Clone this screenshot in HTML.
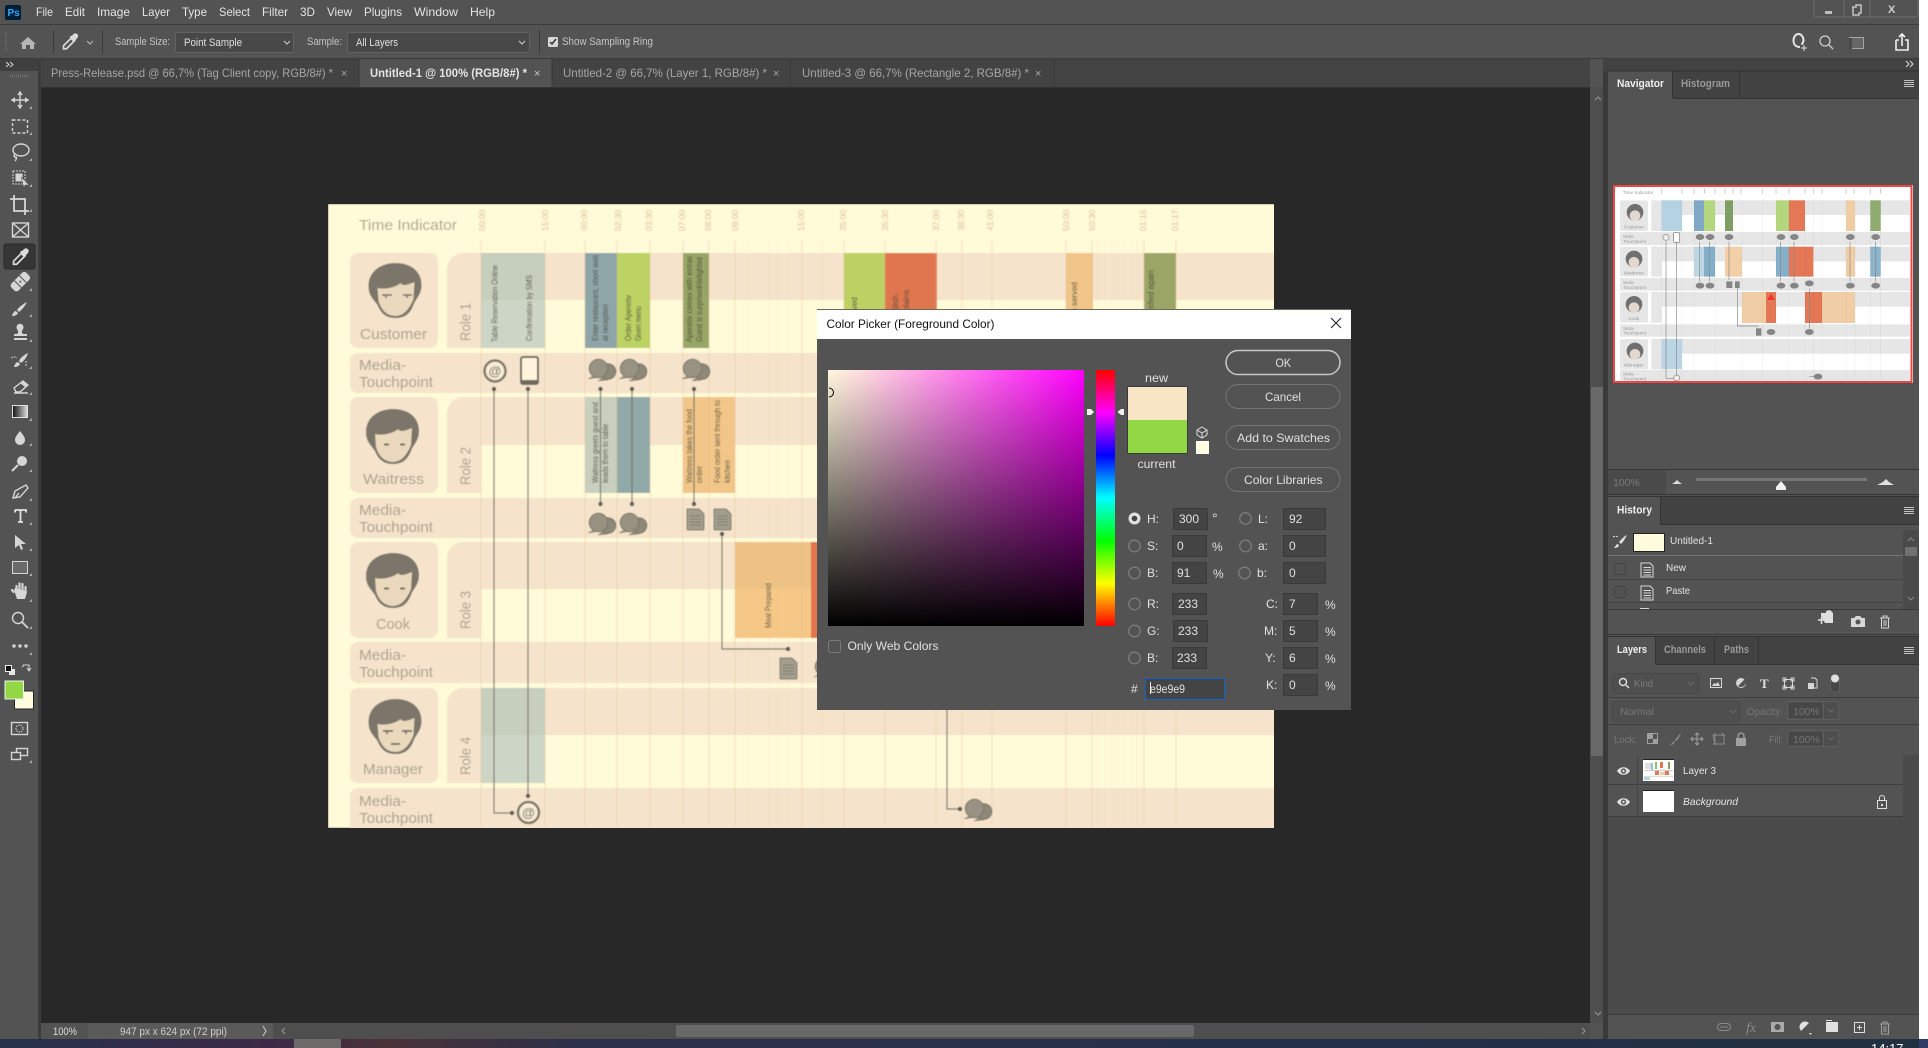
<!DOCTYPE html>
<html><head><meta charset="utf-8"><title>Photoshop Color Picker</title>
<style>
html,body{margin:0;padding:0;background:#fff;width:1928px;height:1048px;overflow:hidden}
svg{display:block;font-family:"Liberation Sans",sans-serif}
.m{fill:#e4e4e4;font-size:12px}
.o{fill:#c4c4c4;font-size:11px}
.t{fill:#a6a6a6;font-size:12px}
.d{fill:#e0e0e0;font-size:12px}
.p{fill:#f0f0f0;font-size:11px;font-weight:bold}
.q{fill:#9a9a9a;font-size:11px;font-weight:bold}
.l{fill:#e4e4e4;font-size:10.5px}
.g{fill:#777;font-size:10.5px}
.a{fill:#a99f8c;font-size:15px}
.b{fill:#474b39;font-size:8px}
.tm{fill:#dcb896;font-size:8.5px}
.ic{fill:none;stroke:#d6d6d6;stroke-width:1.4}
.if{fill:#d6d6d6}
.ln{stroke:#7d776b;stroke-width:1.2;fill:none}
.vl{stroke:#e3b78f;stroke-opacity:.28;stroke-width:1.3}
.vf{stroke:#e3b78f;stroke-opacity:.14;stroke-width:1}
.fd{fill:#444;stroke:#3a3a3a}
.rd{fill:none;stroke:#7c7c7c;stroke-width:1.3}
.bt{fill:none;stroke:#757575;stroke-width:1}
</style></head><body>
<svg width="1928" height="1048" viewBox="0 0 1928 1048" xmlns="http://www.w3.org/2000/svg">
<defs>
<filter id="bl" x="0" y="0" width="1" height="1"><feGaussianBlur stdDeviation=".4"/></filter>
<linearGradient id="gh" x1="0" x2="1" y1="0" y2="0"><stop offset="0" stop-color="#fff8dc"/><stop offset=".13" stop-color="#ffdce0"/><stop offset="1" stop-color="#f0f"/></linearGradient>
<linearGradient id="gv" x1="0" x2="0" y1="0" y2="1"><stop offset="0" stop-color="#000" stop-opacity="0"/><stop offset="1" stop-color="#000"/></linearGradient>
<linearGradient id="hue" x1="0" x2="0" y1="0" y2="1"><stop offset="0" stop-color="#f00"/><stop offset=".167" stop-color="#f0f"/><stop offset=".333" stop-color="#00f"/><stop offset=".5" stop-color="#0ff"/><stop offset=".667" stop-color="#0f0"/><stop offset=".833" stop-color="#ff0"/><stop offset="1" stop-color="#f00"/></linearGradient>
<linearGradient id="tb" x1="0" x2="1" y1="0" y2="0"><stop offset="0" stop-color="#25324a"/><stop offset=".14" stop-color="#3d2947"/><stop offset=".2" stop-color="#4a3238"/><stop offset=".3" stop-color="#2c3048"/><stop offset=".7" stop-color="#252f4a"/><stop offset="1" stop-color="#21303f"/></linearGradient>
<linearGradient id="gg"><stop offset="0" stop-color="#111"/><stop offset="1" stop-color="#ddd"/></linearGradient>
<g id="hair"><path d="M-27-5C-27-20-14-28 0-28 15-28 26-20 26-6 26 4 20 8 18 14 14 24 8 27 0 27-8 27-14 24-18 14-22 8-27 5-27-5Z" fill="#7b7569"/><path d="M-18-3C-10-1 1-4 5-8 7-4 14-7 19-9L18 8C14 18 8 25 0 25-8 25-14 20-17 10Z" fill="#ead9bc"/></g>
<g id="bub"><circle cx="20" cy="12.500" r="7.800" fill="#8e8878" stroke="#7a7468"/><path d="M15 18.500l-5 3.500 10-1z" fill="#8e8878" stroke="#7a7468" stroke-width=".5"/><circle cx="10.500" cy="9.500" r="9.300" fill="#989283" stroke="#7a7468"/><path d="M5 17l-5 3 10-1.500z" fill="#989283" stroke="#7a7468" stroke-width=".5"/></g>
<g id="doc"><path d="M1 1H13L18 6V21a1 1 0 0 1-1 1H2a1 1 0 0 1-1-1Z" fill="#a39d8e" stroke="#7d776b"/><path d="M4 8H15M4 11H15M4 14H15M4 17H15" stroke="#76705f" stroke-width=".8"/></g>
<g id="hist"><path d="M.5.5h9l3 3v11H.500z" fill="none" stroke="#dadada"/><path d="M3 5h7.500M3 7.500h7.500M3 10h7.500M3 12.500h7.500" stroke="#dadada"/></g>
<g id="trash"><path d="M1 3h10M4 3V1h4v2M2.500 3v10h7V3M5 5v6M7 5v6" fill="none" stroke="#d6d6d6"/></g>
<g id="menuic"><path d="M0 .5h10M0 2.500h10M0 4.500h10M0 6.500h10" stroke="#c4c4c4"/></g>
<g id="eye"><path d="M0 5C3 0 10 0 13 5 10 10 3 10 0 5Z" fill="#e0e0e0"/><circle cx="6.500" cy="5" r="2.600" fill="#535353"/><circle cx="6.500" cy="5" r="1.200" fill="#e0e0e0"/></g>
<g id="dd"><path d="M1 10.500V8.500L6 3.500 8 5.500 3 10.500Z" fill="none" stroke="#dcdcdc" stroke-width="1.100"/><path d="M5 2.500L7 1.500C8 0 9.500 0 10.300.8 11 1.500 11 3 9.500 4L8.500 6Z" fill="#dcdcdc"/></g>
</defs>

<!-- base -->
<rect width="1928" height="1048" fill="#ffffff"/>
<rect width="1920" height="1039" fill="#535353"/>
<rect x="1919" y="0" width="9" height="1039" fill="#fff"/>
<rect x="0" y="24" width="1919" height="1" fill="#3b3b3b"/>
<rect x="0" y="58" width="1919" height="1" fill="#3b3b3b"/>
<rect x="41" y="59" width="1549" height="28" fill="#434343"/>
<rect x="41" y="87" width="1549" height="936" fill="#282828"/>
<rect x="38" y="59" width="3" height="980" fill="#3c3c3c"/>
<rect x="0" y="59" width="38" height="12" fill="#3f3f3f"/>

<!-- menu -->
<rect x="5" y="5" width="16" height="15" rx="2" fill="#001e36"/>
<text x="7.500" y="16" font-size="10" font-weight="bold" fill="#31a8ff">Ps</text>
<text class="m" x="36" y="16" textLength="17" lengthAdjust="spacingAndGlyphs">File</text>
<text class="m" x="65" y="16" textLength="20" lengthAdjust="spacingAndGlyphs">Edit</text>
<text class="m" x="97" y="16" textLength="33" lengthAdjust="spacingAndGlyphs">Image</text>
<text class="m" x="142" y="16" textLength="28" lengthAdjust="spacingAndGlyphs">Layer</text>
<text class="m" x="182" y="16" textLength="25" lengthAdjust="spacingAndGlyphs">Type</text>
<text class="m" x="219" y="16" textLength="31" lengthAdjust="spacingAndGlyphs">Select</text>
<text class="m" x="262" y="16" textLength="26" lengthAdjust="spacingAndGlyphs">Filter</text>
<text class="m" x="300" y="16" textLength="15" lengthAdjust="spacingAndGlyphs">3D</text>
<text class="m" x="327" y="16" textLength="25" lengthAdjust="spacingAndGlyphs">View</text>
<text class="m" x="364" y="16" textLength="38" lengthAdjust="spacingAndGlyphs">Plugins</text>
<text class="m" x="414" y="16" textLength="44" lengthAdjust="spacingAndGlyphs">Window</text>
<text class="m" x="470" y="16" textLength="25" lengthAdjust="spacingAndGlyphs">Help</text>
<!-- window controls -->
<path d="M1814 0v15a2 2 0 0 0 2 2h100a2 2 0 0 0 2-2V0" fill="none" stroke="#6c6c6c"/>
<path d="M1844 0v17M1870 0v17" stroke="#6c6c6c"/>
<rect x="1825" y="11" width="7" height="3" fill="#bdbdbd"/>
<path d="M1852 7h4v-2h5v8h-2v2h-6v-8" fill="none" stroke="#c4c4c4" stroke-width="1.500"/>
<text x="1888" y="13" font-size="11" fill="#cfcfcf" font-weight="bold">X</text>

<!-- options bar -->
<path d="M28 37l8 7h-2v5h-4v-4h-4v4h-4v-5h-2z" fill="#b6b6b6"/>
<path d="M53.500 30v24M102.500 30v24M539.500 30v24" stroke="#3b3b3b"/>
<path d="M6 32v20" stroke="#666" stroke-dasharray="1 1" stroke-width="2"/>
<g transform="translate(62,33) scale(1.500)"><use href="#dd"/></g>
<path d="M87 41l3 3 3-3" fill="none" stroke="#bbb"/>
<text class="o" x="115" y="45" textLength="55" lengthAdjust="spacingAndGlyphs">Sample Size:</text>
<rect x="175.500" y="32.500" width="118" height="20" rx="2" fill="#484848" stroke="#626262"/>
<text class="d" style="font-size:11px" x="184" y="46" textLength="58" lengthAdjust="spacingAndGlyphs">Point Sample</text>
<path d="M284 41l3 3 3-3" fill="none" stroke="#ccc"/>
<text class="o" x="307" y="45" textLength="35" lengthAdjust="spacingAndGlyphs">Sample:</text>
<rect x="347.500" y="32.500" width="182" height="20" rx="2" fill="#484848" stroke="#626262"/>
<text class="d" style="font-size:11px" x="356" y="46" textLength="42" lengthAdjust="spacingAndGlyphs">All Layers</text>
<path d="M519 41l3 3 3-3" fill="none" stroke="#ccc"/>
<rect x="548" y="37" width="10" height="10" rx="1.500" fill="#d8d8d8"/><path d="M550 42l2 2 4-5" fill="none" stroke="#333" stroke-width="1.500"/>
<text class="o" x="562" y="45" textLength="91" lengthAdjust="spacingAndGlyphs">Show Sampling Ring</text>
<!-- right option icons -->
<path d="M1800 47c-4 0-6.500-2.500-6.500-6.500s2.500-6.500 5-6.500 5 2.500 5 6.500c0 2-1 3-2 4" fill="none" stroke="#e4e4e4" stroke-width="2"/><path d="M1801 48h6M1804 45v6" stroke="#e4e4e4"/>
<circle cx="1825" cy="41" r="5" fill="none" stroke="#cfcfcf" stroke-width="1.300"/><path d="M1829 45l4 4" stroke="#cfcfcf" stroke-width="1.300"/>
<rect x="1849.500" y="37.500" width="14" height="11" fill="#666" stroke="#a6a6a6"/><path d="M1849 38h3v11h-3" fill="#4a4a4a"/>
<path d="M1896 40v10h12V40h-3M1899 40h-3M1902 46V34M1899 37l3-3 3 3" fill="none" stroke="#f0f0f0" stroke-width="1.600"/>

<!-- tabs -->
<rect x="359" y="59" width="193" height="28" fill="#535353"/>
<path d="M359 59v28M552 59v28M790 59v28M1054 59v28" stroke="#383838"/>
<rect x="41" y="87" width="1549" height="1" fill="#333"/>
<text class="t" x="51" y="77" textLength="282" lengthAdjust="spacingAndGlyphs">Press-Release.psd @ 66,7% (Tag Client copy, RGB/8#) *</text>
<text x="341" y="77" font-size="11" fill="#a6a6a6">×</text>
<text class="m" font-weight="bold" x="370" y="77" textLength="157" lengthAdjust="spacingAndGlyphs">Untitled-1 @ 100% (RGB/8#) *</text>
<text x="534" y="77" font-size="11" fill="#ccc">×</text>
<text class="t" x="563" y="77" textLength="204" lengthAdjust="spacingAndGlyphs">Untitled-2 @ 66,7% (Layer 1, RGB/8#) *</text>
<text x="773" y="77" font-size="11" fill="#a6a6a6">×</text>
<text class="t" x="802" y="77" textLength="227" lengthAdjust="spacingAndGlyphs">Untitled-3 @ 66,7% (Rectangle 2, RGB/8#) *</text>
<text x="1035" y="77" font-size="11" fill="#a6a6a6">×</text>

<!-- toolbar -->
<path d="M6 62l3 2.500-3 2.500M10 62l3 2.500-3 2.500" fill="none" stroke="#d8d8d8"/>
<path d="M10 76h19" stroke="#6c6c6c" stroke-width="3" stroke-dasharray="1 1"/>
<path d="M32 106v3h-3zM32 132v3h-3zM32 158v3h-3zM32 184v3h-3zM32 209v3h-3zM32 262v3h-3zM32 288v3h-3zM32 314v3h-3zM32 339v3h-3zM32 366v3h-3zM32 392v3h-3zM32 418v3h-3zM32 443v3h-3zM32 469v3h-3zM32 498v3h-3zM32 522v3h-3zM32 548v3h-3zM32 573v3h-3zM32 599v3h-3zM32 626v3h-3zM32 652v3h-3zM32 760v3h-3z" fill="#aaa"/>
<!-- move --><path d="M20 93v14M13 100h14M18 95l2-3 2 3M18 105l2 3 2-3M15 98l-3 2 3 2M25 98l3 2-3 2" class="ic"/>
<!-- marquee --><rect x="12.500" y="120" width="15" height="13" fill="none" stroke="#d6d6d6" stroke-width="1.400" stroke-dasharray="3 2"/>
<!-- lasso --><ellipse cx="21" cy="150" rx="8" ry="6" class="ic"/><path d="M15 154c-2 2 0 4 1 3 1 1 0 3-1 4" class="ic"/>
<!-- object select --><rect x="13" y="171" width="12" height="13" fill="none" stroke="#d6d6d6" stroke-dasharray="2 1"/><rect x="15.500" y="173.500" width="7" height="8" fill="#d6d6d6"/><path d="M21 177l8 8-4 0-1 3z" fill="#d6d6d6" stroke="#535353" stroke-width=".5"/>
<!-- crop --><path d="M14 195v16h15M10 199h15v16" fill="none" stroke="#d6d6d6" stroke-width="1.800"/>
<!-- frame --><rect x="12.500" y="223" width="16" height="14" class="ic"/><path d="M12.500 223l16 14M28.500 223l-16 14" class="ic"/>
<!-- eyedropper active --><rect x="4" y="244" width="31" height="25" rx="2" fill="#363636" stroke="#2a2a2a"/><g transform="translate(12,248) scale(1.550)"><use href="#dd"/></g>
<!-- heal --><g transform="rotate(-45 20 282)"><rect x="10" y="277" width="21" height="10" rx="3" fill="#d6d6d6"/><path d="M17 277v10M24 277v10" stroke="#535353"/><circle cx="20.500" cy="282" r="1" fill="#535353"/></g>
<!-- brush --><path d="M27 302c-4 2-8 5-10 8l2 2c3-2 6-6 8-10zM16 311c-2 0-3 2-4 5 3 0 5-1 6-3z" fill="#d6d6d6"/>
<!-- stamp --><path d="M17 334c2-2 1-3 0-5a3.500 3.500 0 1 1 6 0c-1 2-2 3 0 5h4v2H14v-2zM14 338h13v2H14z" fill="#d6d6d6"/>
<!-- history brush --><path d="M28 353c-4 2-8 5-9 8l2 2c3-2 6-6 7-10zM18 362c-2 0-3 2-4 5 3 0 5-1 6-3z" fill="#d6d6d6"/><path d="M11 358c3-2 4-1 6 0M26 361v6" fill="none" stroke="#d6d6d6" stroke-dasharray="2 1"/>
<!-- eraser --><path d="M14 388l9-7 5 4-8 7h-4zM14 393h14" class="ic"/><path d="M20 383l3-2 5 4-3 2z" fill="#d6d6d6"/>
<!-- gradient --><rect x="12.500" y="405.500" width="15" height="12" fill="url(#gg)" stroke="#e0e0e0"/>
<!-- blur --><path d="M20 431c3 4 5 6 5 9a5 5 0 0 1-10 0c0-3 2-5 5-9z" fill="#d6d6d6"/>
<!-- dodge --><circle cx="22" cy="461" r="5" fill="#d6d6d6"/><path d="M18 465l-6 6" stroke="#d6d6d6" stroke-width="2"/>
<!-- pen --><path d="M26 485l2 3-8 9-7 1 2-7z M19 493l-4 5" class="ic"/>
<!-- type --><path d="M15 510h11v2.500M15 510v2.500M20.500 510v12M18 522h5" fill="none" stroke="#e0e0e0" stroke-width="1.800"/>
<!-- path select --><path d="M15 535l11 9-5 0 2 5-2 1-2-5-4 3z" fill="#d6d6d6"/>
<!-- rect --><rect x="12.500" y="561.500" width="15" height="12" fill="#6a6a6a" stroke="#d6d6d6"/>
<!-- hand --><path d="M14 590l3 9h8l2-7-1-1-11-3z" fill="#d6d6d6"/><path d="M13.500 592l-1.500-2M16.500 592v-6M19.500 591v-7.500M22.500 591v-7M25.500 592v-5" stroke="#d6d6d6" stroke-width="2.200" stroke-linecap="round"/>
<!-- zoom --><circle cx="18" cy="618" r="5.500" class="ic"/><path d="M22 622l6 6" stroke="#d6d6d6" stroke-width="1.800"/>
<!-- dots --><circle cx="14" cy="646" r="1.800" fill="#cfcfcf"/><circle cx="20" cy="646" r="1.800" fill="#cfcfcf"/><circle cx="26" cy="646" r="1.800" fill="#cfcfcf"/>
<!-- default/swap --><rect x="9" y="669" width="6" height="6" fill="#e6e6e6"/><rect x="5.500" y="665.500" width="6" height="6" fill="#111" stroke="#eee"/>
<path d="M23 665h6v5M22 667l2-2 0 0M27 668l2 3 2-3" fill="none" stroke="#d6d6d6"/>
<rect x="14.500" y="691" width="19" height="18" fill="#fffbdf" stroke="#222"/>
<rect x="5" y="681" width="18.500" height="18" fill="#92d744" stroke="#f0f0f0"/>
<rect x="11.500" y="722.500" width="16" height="12" class="ic"/><circle cx="19.500" cy="728.500" r="3.500" fill="none" stroke="#d6d6d6" stroke-dasharray="1.500 1"/>
<rect x="16.500" y="748.500" width="11" height="7" class="ic"/><rect x="11.500" y="752.500" width="9" height="7" fill="#535353" stroke="#d6d6d6" stroke-width="1.400"/>

<!-- CANVAS ARTWORK -->
<svg x="328" y="204" width="946" height="624" viewBox="328 204 946 624">
<g filter="url(#bl)">
<rect x="328" y="204" width="947" height="624" fill="#fffad8"/>
<g fill="#f5e4cb">
<rect x="481" y="253" width="794" height="47"/>
<rect x="481" y="397" width="794" height="48"/>
<rect x="481" y="542" width="794" height="47"/>
<rect x="481" y="688" width="794" height="47"/>
<rect x="350" y="253" width="88" height="95" rx="8"/>
<rect x="350" y="397" width="88" height="96" rx="8"/>
<rect x="350" y="542" width="88" height="96" rx="8"/>
<rect x="350" y="688" width="88" height="95" rx="8"/>
<path d="M481 253h-18a16 16 0 0 0-16 16v79h34zM481 397h-18a16 16 0 0 0-16 16v80h34zM481 542h-18a16 16 0 0 0-16 16v80h34zM481 688h-18a16 16 0 0 0-16 16v79h34z"/>
<rect x="350" y="353" width="940" height="40" rx="8"/>
<rect x="350" y="498" width="940" height="40" rx="8"/>
<rect x="350" y="642" width="940" height="41" rx="8"/>
<rect x="350" y="788" width="940" height="50" rx="8"/>
</g>
<!-- blocks row 1 -->
<rect x="481" y="253" width="64" height="47" fill="#c6cebe"/><rect x="481" y="300" width="64" height="48" fill="#cdd5c6"/>
<rect x="585" y="253" width="32" height="95" fill="#8fa6a8"/>
<rect x="617" y="253" width="33" height="95" fill="#bcd264"/>
<rect x="683" y="253" width="26" height="95" fill="#97a566"/>
<rect x="844" y="253" width="41" height="95" fill="#bdd064"/>
<rect x="885" y="253" width="52" height="95" fill="#df764d"/>
<rect x="1066" y="253" width="27" height="95" fill="#f1c589"/>
<rect x="1144" y="253" width="32" height="95" fill="#9ba566"/>
<!-- row 2 -->
<rect x="585" y="397" width="32" height="96" fill="#c8cfbd"/>
<rect x="617" y="397" width="33" height="96" fill="#91a9a9"/>
<rect x="683" y="397" width="52" height="96" fill="#f2c688"/>
<rect x="844" y="397" width="41" height="96" fill="#91a9a9"/>
<!-- row 3 -->
<rect x="735" y="542" width="76" height="47" fill="#eec284"/><rect x="735" y="589" width="76" height="49" fill="#f5c888"/>
<rect x="811" y="542" width="30" height="96" fill="#e2744d"/>
<!-- row 4 -->
<rect x="481" y="688" width="64" height="47" fill="#c6cebe"/><rect x="481" y="735" width="64" height="48" fill="#cdd5c6"/>
<!-- timeline verticals -->
<path class="vl" d="M481 240V828M545 240V828M585 240V828M617 240V828M650 240V828M683 240V828M709 240V828M735 240V828M802 240V828M844 240V828M885 240V828M936 240V828M962 240V828M992 240V828M1066 240V828M1092 240V828M1144 240V828M1176 240V828"/>
<path class="vf" d="M749 240V828M769 240V828M778 240V828M789 240V828M822 240V828M1098 240V828M1105 240V828M1112 240V828M1118 240V828M1125 240V828M1131 240V828M1137 240V828"/>
<!-- time labels -->
<g class="tm">
<text transform="translate(485,231) rotate(-90)">00:00</text>
<text transform="translate(548,231) rotate(-90)">15:00</text>
<text transform="translate(587,231) rotate(-90)">00:00</text>
<text transform="translate(621,231) rotate(-90)">02:30</text>
<text transform="translate(652,231) rotate(-90)">03:30</text>
<text transform="translate(685,231) rotate(-90)">07:00</text>
<text transform="translate(711,231) rotate(-90)">08:00</text>
<text transform="translate(738,231) rotate(-90)">09:00</text>
<text transform="translate(804,231) rotate(-90)">15:00</text>
<text transform="translate(846,231) rotate(-90)">35:00</text>
<text transform="translate(888,231) rotate(-90)">35:30</text>
<text transform="translate(939,231) rotate(-90)">37:00</text>
<text transform="translate(964,231) rotate(-90)">38:30</text>
<text transform="translate(993,231) rotate(-90)">41:00</text>
<text transform="translate(1069,231) rotate(-90)">50:00</text>
<text transform="translate(1095,231) rotate(-90)">50:30</text>
<text transform="translate(1146,231) rotate(-90)">01:15</text>
<text transform="translate(1178,231) rotate(-90)">01:17</text>
</g>
<text x="359" y="230" font-size="15" fill="#b0a48e" textLength="98" lengthAdjust="spacingAndGlyphs">Time Indicator</text>
<!-- avatars -->
<use href="#hair" x="395.500" y="291"/><path d="M382 295h10M386 296v2M403 295h9M407 296v2" stroke="#6f695d" stroke-width="1.600" fill="none"/>
<use href="#hair" x="393" y="437"/><path d="M384 444.500h5M400 444.500h5" stroke="#6f695d" stroke-width="2"/>
<use href="#hair" x="393" y="581"/><path d="M384 588.500h5M400 588.500h5" stroke="#6f695d" stroke-width="2"/>
<use href="#hair" x="395.500" y="727"/><path d="M383 731h10M387 732v2M402 731h10M406 732v2M391 744h9" stroke="#6f695d" stroke-width="1.800" fill="none"/>
<g class="a">
<text x="360" y="339" textLength="67" lengthAdjust="spacingAndGlyphs">Customer</text>
<text x="363" y="484" textLength="61" lengthAdjust="spacingAndGlyphs">Waitress</text>
<text x="376" y="629" textLength="34" lengthAdjust="spacingAndGlyphs">Cook</text>
<text x="363" y="774" textLength="60" lengthAdjust="spacingAndGlyphs">Manager</text>
<text transform="translate(470.500,341) rotate(-90)" textLength="38" lengthAdjust="spacingAndGlyphs">Role 1</text>
<text transform="translate(470.500,485) rotate(-90)" textLength="38" lengthAdjust="spacingAndGlyphs">Role 2</text>
<text transform="translate(470.500,629) rotate(-90)" textLength="38" lengthAdjust="spacingAndGlyphs">Role 3</text>
<text transform="translate(470.500,775) rotate(-90)" textLength="38" lengthAdjust="spacingAndGlyphs">Role 4</text>
<text x="359" y="370" textLength="47" lengthAdjust="spacingAndGlyphs">Media-</text><text x="359" y="387" textLength="74" lengthAdjust="spacingAndGlyphs">Touchpoint</text>
<text x="359" y="515" textLength="47" lengthAdjust="spacingAndGlyphs">Media-</text><text x="359" y="532" textLength="74" lengthAdjust="spacingAndGlyphs">Touchpoint</text>
<text x="359" y="660" textLength="47" lengthAdjust="spacingAndGlyphs">Media-</text><text x="359" y="677" textLength="74" lengthAdjust="spacingAndGlyphs">Touchpoint</text>
<text x="359" y="806" textLength="47" lengthAdjust="spacingAndGlyphs">Media-</text><text x="359" y="823" textLength="74" lengthAdjust="spacingAndGlyphs">Touchpoint</text>
</g>
<!-- block texts -->
<g class="b">
<text transform="translate(497.500,342) rotate(-90)" textLength="77" lengthAdjust="spacingAndGlyphs">Table Reservation Online</text>
<text transform="translate(532,341) rotate(-90)" textLength="66" lengthAdjust="spacingAndGlyphs">Confirmation by SMS</text>
<text transform="translate(598,341) rotate(-90)" textLength="86" lengthAdjust="spacingAndGlyphs">Enter restaurant, short wait</text>
<text transform="translate(608,341) rotate(-90)" textLength="37" lengthAdjust="spacingAndGlyphs">at reception</text>
<text transform="translate(631,341) rotate(-90)" textLength="46" lengthAdjust="spacingAndGlyphs">Order Aperetiv</text>
<text transform="translate(641,341) rotate(-90)" textLength="35" lengthAdjust="spacingAndGlyphs">Given menu</text>
<text transform="translate(692,342) rotate(-90)" textLength="86" lengthAdjust="spacingAndGlyphs">Aperetiv comes with extras</text>
<text transform="translate(702,342) rotate(-90)" textLength="85" lengthAdjust="spacingAndGlyphs">Guest is surprised/delighted</text>
<text transform="translate(598,483) rotate(-90)" textLength="81" lengthAdjust="spacingAndGlyphs">Waitress greets guest and</text>
<text transform="translate(608,483) rotate(-90)" textLength="59" lengthAdjust="spacingAndGlyphs">leads them to table</text>
<text transform="translate(692,483) rotate(-90)" textLength="74" lengthAdjust="spacingAndGlyphs">Waitress takes the food</text>
<text transform="translate(702,483) rotate(-90)" textLength="17" lengthAdjust="spacingAndGlyphs">order</text>
<text transform="translate(720,483) rotate(-90)" textLength="83" lengthAdjust="spacingAndGlyphs">Food order sent through to</text>
<text transform="translate(730,483) rotate(-90)" textLength="23" lengthAdjust="spacingAndGlyphs">kitchen</text>
<text transform="translate(771,628) rotate(-90)" textLength="45" lengthAdjust="spacingAndGlyphs">Meal Prepared</text>
<text transform="translate(857,297) rotate(-90)" text-anchor="end">Aperetiv served</text>
<text transform="translate(898,293) rotate(-90)" text-anchor="end">Main dish.</text>
<text transform="translate(909,290) rotate(-90)" text-anchor="end">Guest complains</text>
<text transform="translate(1077,282) rotate(-90)" text-anchor="end">Dish served</text>
<text transform="translate(1153.500,270) rotate(-90)" text-anchor="end">Guest is satisfied again</text>
</g>
<!-- connector lines -->
<path class="ln" d="M494 389V813H512M528 389V796M600.500 389V504M632 389V504M694 389V504M722 534V649H788M947 640V809H960"/>
<g fill="#5f5a50">
<circle cx="494" cy="389" r="2.200"/><circle cx="528" cy="389" r="2.200"/><circle cx="600.500" cy="389" r="2.200"/><circle cx="632" cy="389" r="2.200"/><circle cx="694" cy="389" r="2.200"/>
<circle cx="512" cy="813" r="2.200"/><circle cx="528" cy="796" r="2.200"/><circle cx="600.500" cy="504" r="2.200"/><circle cx="632" cy="504" r="2.200"/><circle cx="694" cy="504" r="2.200"/>
<circle cx="722" cy="534" r="2.200"/><circle cx="788" cy="649" r="2.200"/><circle cx="960" cy="809" r="2.200"/>
</g>
<!-- @ icons -->
<circle cx="495" cy="371" r="10.500" fill="#f8ecd4" stroke="#7d776b" stroke-width="2.500"/><text x="495" y="375.500" font-size="13" text-anchor="middle" fill="#7d776b" font-weight="bold">@</text>
<circle cx="528.500" cy="812.500" r="10.500" fill="#f8ecd4" stroke="#7d776b" stroke-width="2.500"/><text x="528.500" y="817" font-size="13" text-anchor="middle" fill="#7d776b" font-weight="bold">@</text>
<!-- phone -->
<rect x="521" y="357" width="17" height="27" rx="2" fill="#fff3dc" stroke="#6f695d" stroke-width="2"/><rect x="521" y="380" width="17" height="4" fill="#6f695d"/>
<!-- bubbles -->
<use href="#bub" x="588" y="359"/><use href="#bub" x="619" y="359"/><use href="#bub" x="682" y="359"/>
<use href="#bub" x="588" y="513"/><use href="#bub" x="619" y="513"/><use href="#bub" x="814" y="657"/>
<use href="#bub" x="964" y="799"/>
<!-- docs -->
<use href="#doc" x="686" y="508"/><use href="#doc" x="713" y="508"/><use href="#doc" x="779" y="657"/>
</g>
</svg>

<!-- scrollbars -->
<rect x="1590" y="87" width="13" height="936" fill="#4e4e4e"/>
<rect x="1603" y="59" width="5" height="980" fill="#3a3a3a"/>
<rect x="1591" y="387" width="12" height="369" rx="1" fill="#696969"/>
<path d="M1595 100l3-3 3 3M1595 1012l3 3 3-3" fill="none" stroke="#999"/>
<rect x="41" y="1023" width="1549" height="16" fill="#535353"/>
<rect x="88" y="1023" width="185" height="16" fill="#5a5a5a"/>
<rect x="273" y="1023" width="1317" height="16" fill="#4e4e4e"/>
<rect x="676" y="1025" width="518" height="12" rx="2" fill="#696969"/>
<text x="53" y="1035" font-size="11" fill="#dcdcdc" textLength="24" lengthAdjust="spacingAndGlyphs">100%</text>
<text x="120" y="1035" font-size="11" fill="#cfcfcf" textLength="107" lengthAdjust="spacingAndGlyphs">947 px x 624 px (72 ppi)</text>
<path d="M263 1026l3 5-3 5" fill="none" stroke="#ccc"/><path d="M285 1028l-3 3 3 3" fill="none" stroke="#999"/><path d="M1582 1028l3 3-3 3" fill="none" stroke="#999"/>

<!-- taskbar -->
<rect y="1039" width="1928" height="9" fill="url(#tb)"/>
<rect x="294" y="1039" width="47" height="9" fill="#6d6b6a"/>
<rect x="1919" y="1039" width="9" height="9" fill="#2f3a66"/>
<text x="1871" y="1053" font-size="13" fill="#fff">14:17</text>

<!-- RIGHT PANEL -->
<rect x="1603" y="59" width="316" height="12" fill="#424242"/>
<path d="M1906 61l3 3-3 3M1910 61l3 3-3 3" fill="none" stroke="#ddd"/>
<rect x="1608" y="71" width="311" height="27" fill="#424242"/>
<rect x="1608" y="71" width="64" height="28" fill="#535353"/>
<path d="M1672.500 71v27M1739.500 71v27" stroke="#333"/>
<path d="M1673 98.500h246" stroke="#333"/>
<path d="M1608 71h311" stroke="#333"/>
<text class="p" x="1617" y="87" textLength="47" lengthAdjust="spacingAndGlyphs">Navigator</text>
<text class="q" x="1681" y="87" textLength="49" lengthAdjust="spacingAndGlyphs">Histogram</text>
<use href="#menuic" x="1904" y="80"/>
<!-- Navigator thumbnail -->
<rect x="1613" y="185" width="300" height="198" fill="#fff"/>
<g transform="translate(1600,60) scale(.33333)" filter="url(#bl)">
<g fill="#e6e6e7">
<rect x="185" y="421" width="745" height="44"/><rect x="185" y="560" width="745" height="44"/><rect x="185" y="696" width="745" height="44"/><rect x="185" y="837" width="745" height="44"/>
<rect x="60" y="421" width="84" height="92" rx="6"/><rect x="60" y="560" width="84" height="90" rx="6"/><rect x="60" y="696" width="84" height="92" rx="6"/><rect x="60" y="837" width="84" height="91" rx="6"/>
<rect x="154" y="421" width="31" height="92"/><rect x="154" y="560" width="31" height="90"/><rect x="154" y="696" width="31" height="92"/><rect x="154" y="837" width="31" height="91"/>
<rect x="60" y="516" width="870" height="39"/><rect x="60" y="654" width="870" height="38"/><rect x="60" y="793" width="870" height="37"/><rect x="60" y="930" width="870" height="32"/>
</g>
<path d="M185 385v16M246 385v16M282 385v16M314 385v16M345 385v16M375 385v16M399 385v16M423 385v16M487 385v16M528 385v16M567 385v16M615 385v16M640 385v16M666 385v16M738 385v16M762 385v16M811 385v16M842 385v16" stroke="#c8c8c8" stroke-width="3"/>
<rect x="185" y="421" width="61" height="92" fill="#b5d2e2"/><rect x="282" y="421" width="30" height="92" fill="#7fa9c4"/><rect x="312" y="421" width="33" height="92" fill="#b3d67e"/><rect x="375" y="421" width="24" height="92" fill="#7f9e63"/><rect x="528" y="421" width="39" height="92" fill="#b3d67e"/><rect x="567" y="421" width="48" height="92" fill="#e37756"/><rect x="738" y="421" width="27" height="92" fill="#f0cda5"/><rect x="811" y="421" width="31" height="92" fill="#8fab6f"/>
<rect x="282" y="560" width="30" height="90" fill="#bdd6e4"/><rect x="312" y="560" width="33" height="90" fill="#83aec8"/><rect x="375" y="560" width="51" height="90" fill="#f2cfa6"/><rect x="528" y="560" width="39" height="90" fill="#85afc9"/><rect x="567" y="560" width="73" height="90" fill="#e37756"/><rect x="738" y="560" width="27" height="90" fill="#f0cda5"/><rect x="811" y="560" width="31" height="90" fill="#8ab3cc"/>
<rect x="426" y="696" width="72" height="93" fill="#f0cda5"/><rect x="498" y="696" width="30" height="93" fill="#e37756"/><path d="M513 701l12 19h-24z" fill="#e8382e"/><rect x="615" y="696" width="51" height="93" fill="#e37756"/><rect x="666" y="696" width="99" height="93" fill="#f0cda5"/>
<rect x="185" y="837" width="61" height="91" fill="#bbd5e4"/>
<g fill="#707070"><circle cx="105" cy="457" r="25"/><circle cx="102" cy="597" r="25"/><circle cx="102" cy="733" r="25"/><circle cx="105" cy="873" r="25"/></g>
<g fill="#e3d8d0"><ellipse cx="105" cy="467" rx="16" ry="16"/><ellipse cx="102" cy="607" rx="16" ry="16"/><ellipse cx="102" cy="743" rx="16" ry="16"/><ellipse cx="105" cy="883" rx="16" ry="16"/></g>
<g fill="#858585">
<ellipse cx="300" cy="531" rx="13" ry="9"/><ellipse cx="330" cy="531" rx="13" ry="9"/><ellipse cx="387" cy="531" rx="13" ry="9"/><ellipse cx="543" cy="531" rx="13" ry="9"/><ellipse cx="583" cy="531" rx="13" ry="9"/><ellipse cx="751" cy="531" rx="13" ry="9"/><ellipse cx="827" cy="531" rx="13" ry="9"/>
<ellipse cx="300" cy="677" rx="13" ry="9"/><ellipse cx="330" cy="677" rx="13" ry="9"/><rect x="379" y="664" width="18" height="20"/><rect x="405" y="664" width="14" height="20"/><ellipse cx="543" cy="677" rx="13" ry="9"/><ellipse cx="583" cy="677" rx="13" ry="9"/><ellipse cx="628" cy="670" rx="13" ry="9"/><ellipse cx="751" cy="677" rx="13" ry="9"/><ellipse cx="827" cy="677" rx="13" ry="9"/>
<rect x="468" y="805" width="16" height="22"/><ellipse cx="513" cy="816" rx="13" ry="9"/><ellipse cx="628" cy="816" rx="13" ry="9"/><ellipse cx="654" cy="950" rx="13" ry="9"/>
</g>
<circle cx="198" cy="532" r="9" fill="#eee" stroke="#888" stroke-width="2"/><rect x="221" y="518" width="18" height="29" rx="2" fill="#fff" stroke="#777" stroke-width="2"/><circle cx="230" cy="954" r="9" fill="#eee" stroke="#888" stroke-width="2"/>
<path d="M198 545V955H222M230 545V945M298 545V665M328 545V665M387 545V660M412 684V798H476M542 545V665M582 545V665M628 685V805M750 545V665M827 545V665M628 950H642" fill="none" stroke="#888" stroke-width="2"/>
<path d="M185 421V962M246 421V962M282 421V962M345 421V962M426 421V962M487 421V962M528 421V962M567 421V962M615 421V962M640 421V962M666 421V962M738 421V962M765 421V962M811 421V962M842 421V962" stroke="#000" stroke-opacity=".05" stroke-width="2"/>
<g fill="#9a9a9a"><text x="68" y="402" font-size="14" textLength="92" lengthAdjust="spacingAndGlyphs">Time Indicator</text><text x="70" y="534" font-size="14" textLength="34" lengthAdjust="spacingAndGlyphs">Media-</text><text x="70" y="549" font-size="14" textLength="68" lengthAdjust="spacingAndGlyphs">Touchpoint</text><text x="70" y="672" font-size="14" textLength="34" lengthAdjust="spacingAndGlyphs">Media-</text><text x="70" y="687" font-size="14" textLength="68" lengthAdjust="spacingAndGlyphs">Touchpoint</text><text x="70" y="810" font-size="14" textLength="34" lengthAdjust="spacingAndGlyphs">Media-</text><text x="70" y="824" font-size="14" textLength="68" lengthAdjust="spacingAndGlyphs">Touchpoint</text><text x="70" y="946" font-size="14" textLength="34" lengthAdjust="spacingAndGlyphs">Media-</text><text x="70" y="961" font-size="14" textLength="68" lengthAdjust="spacingAndGlyphs">Touchpoint</text>
<text x="72" y="505" font-size="14" textLength="60" lengthAdjust="spacingAndGlyphs">Customer</text><text x="72" y="643" font-size="14" textLength="60" lengthAdjust="spacingAndGlyphs">Waitress</text><text x="86" y="780" font-size="14" textLength="32" lengthAdjust="spacingAndGlyphs">Cook</text><text x="72" y="920" font-size="14" textLength="60" lengthAdjust="spacingAndGlyphs">Manager</text></g>
</g>
<rect x="1614" y="186" width="297.500" height="196" fill="none" stroke="#f14444" stroke-width="2"/>
<!-- nav slider -->
<path d="M1608 469.500h311M1608 494.500h311" stroke="#363636"/>
<rect x="1608" y="470" width="58" height="24" fill="#4a4a4a"/>
<text x="1613" y="486" font-size="10.500" fill="#7a7a7a">100%</text>
<path d="M1672 484l3-2 2-2 2 2 3 2z" fill="#e0e0e0"/>
<rect x="1696" y="478" width="171" height="3" fill="#777"/>
<path d="M1781 481l5 6v3h-10v-3z" fill="#f0f0f0"/>
<path d="M1877 485l6-3 3-3 3 3 5 3z" fill="#e0e0e0"/>
<!-- history -->
<rect x="1608" y="497" width="311" height="27" fill="#424242"/>
<rect x="1608" y="497" width="52" height="28" fill="#535353"/>
<path d="M1660.500 497v27M1660 524.500h259M1608 496.500h311" stroke="#333"/>
<text class="p" x="1617" y="513.500" textLength="35" lengthAdjust="spacingAndGlyphs">History</text>
<use href="#menuic" x="1904" y="507"/>
<rect x="1903" y="530" width="16" height="79" fill="#4a4a4a"/>
<rect x="1905" y="547" width="12" height="9" fill="#717171"/>
<path d="M1908 541l3-3 3 3M1908 597l3 3 3-3" fill="none" stroke="#888"/>
<path d="M1608 555.500h295" stroke="#777"/><path d="M1608 579.500h294M1608 602.500h294" stroke="#444"/>
<path d="M1627 535c-4 2-6 5-8 7l2 2c2-2 4-5 6-9zM1618 544c-2 0-2 2-4 4 3 0 4-1 5-2z" fill="#e0e0e0"/><path d="M1613 537c2-1 3-1 5 0" stroke="#e0e0e0" fill="none" stroke-dasharray="2 1"/>
<rect x="1633.500" y="533.500" width="31" height="18" fill="#fffbdc" stroke="#222"/>
<text class="l" x="1670" y="544" textLength="43" lengthAdjust="spacingAndGlyphs">Untitled-1</text>
<rect x="1614.500" y="563.500" width="11" height="11" fill="none" stroke="#444"/>
<rect x="1614.500" y="586.500" width="11" height="11" fill="none" stroke="#444"/>
<use href="#hist" x="1640.500" y="562.500"/><use href="#hist" x="1640.500" y="585.500"/>
<rect x="1640" y="608" width="9" height="1" fill="#dadada"/>
<text class="l" x="1666" y="571" textLength="20" lengthAdjust="spacingAndGlyphs">New</text>
<text class="l" x="1666" y="594" textLength="24" lengthAdjust="spacingAndGlyphs">Paste</text>
<path d="M1608 609.500h311M1608 634.500h311" stroke="#393939"/>
<path d="M1818 620h7M1821.500 617v7" stroke="#e0e0e0" stroke-width="1.500"/><path d="M1821 616v-3h5v-2l4-1 3 3v10h-8" fill="#e0e0e0"/>
<path d="M1851 618h3l2-2h4l2 2h3v9h-14z" fill="#d6d6d6"/><circle cx="1858" cy="622" r="2.500" fill="#535353"/>
<use href="#trash" x="1879" y="615"/>
<!-- layers -->
<rect x="1608" y="637" width="311" height="27" fill="#424242"/>
<rect x="1608" y="637" width="47" height="28" fill="#535353"/>
<path d="M1655.500 637v27M1714.500 637v27M1758.500 637v27M1656 664.500h263M1608 636.500h311" stroke="#333"/>
<text class="p" x="1617" y="653" textLength="30" lengthAdjust="spacingAndGlyphs">Layers</text>
<text class="q" x="1664" y="653" textLength="42" lengthAdjust="spacingAndGlyphs">Channels</text>
<text class="q" x="1724" y="653" textLength="25" lengthAdjust="spacingAndGlyphs">Paths</text>
<use href="#menuic" x="1904" y="647"/>
<rect x="1612.500" y="673.500" width="86" height="20" rx="3" fill="#4f4f4f" stroke="#474747"/>
<circle cx="1623" cy="682" r="3.500" fill="none" stroke="#e0e0e0" stroke-width="1.400"/><path d="M1626 685l3 3" stroke="#e0e0e0" stroke-width="1.400"/>
<text x="1634" y="687" font-size="10.500" fill="#7d7d7d" textLength="19" lengthAdjust="spacingAndGlyphs">Kind</text>
<path d="M1688 682l3 3 3-3" fill="none" stroke="#6a6a6a"/>
<rect x="1710.500" y="678.500" width="11" height="9" fill="none" stroke="#d6d6d6"/><path d="M1712 686l2-3 2 1 2-2 2 4z" fill="#d6d6d6"/>
<circle cx="1741" cy="683" r="5" fill="#d6d6d6"/><path d="M1745 679a5 5 0 0 1-7 7z" fill="#535353"/>
<text x="1760" y="688" font-size="13" font-weight="bold" font-family="Liberation Serif" fill="#e0e0e0">T</text>
<rect x="1784.500" y="679.500" width="8" height="8" fill="none" stroke="#d6d6d6"/><path d="M1783 678h3v3h-3zM1791 678h3v3h-3zM1783 686h3v3h-3zM1791 686h3v3h-3z" fill="none" stroke="#d6d6d6"/>
<path d="M1811 678h4l2 2v8h-3" fill="none" stroke="#d6d6d6"/><rect x="1808" y="683" width="6" height="6" fill="#d6d6d6"/>
<rect x="1830.500" y="674.500" width="9" height="18" rx="4.500" fill="#474747" stroke="#606060"/><circle cx="1835" cy="678.500" r="4" fill="#e0e0e0"/>
<path d="M1608 697.500h311" stroke="#3e3e3e"/>
<rect x="1612.500" y="701.500" width="127" height="20" rx="2" fill="#4f4f4f" stroke="#474747"/>
<text x="1620" y="715" font-size="10.500" fill="#787878">Normal</text>
<path d="M1730 710l3 3 3-3" fill="none" stroke="#6a6a6a"/>
<text class="g" x="1747" y="715" textLength="36" lengthAdjust="spacingAndGlyphs">Opacity:</text>
<rect x="1787.500" y="701.500" width="51" height="18" rx="2" fill="#4e4e4e" stroke="#5e5e5e"/><rect x="1789" y="703" width="33" height="15" fill="#474747"/><path d="M1823.500 702v17" stroke="#5e5e5e"/>
<text x="1793" y="715" font-size="10.500" fill="#757575">100%</text><path d="M1828 709l3 3 3-3" fill="none" stroke="#6a6a6a"/>
<path d="M1608 724.500h311" stroke="#3e3e3e"/>
<text class="g" x="1614" y="743" textLength="23" lengthAdjust="spacingAndGlyphs">Lock:</text>
<rect x="1647.500" y="733.500" width="10" height="10" fill="none" stroke="#a0a0a0"/><path d="M1648 734h5v5h-5zM1653 739h5v5h-5z" fill="#a0a0a0"/>
<path d="M1681 733c-2 2-5 5-6 7l1 1c2-1 4-5 5-8zM1674 741l-4 4 3-.5 2-2.500z" fill="#8a8a8a"/>
<path d="M1697 733v12M1691 739h12M1695 735l2-2 2 2M1695 743l2 2 2-2M1693 737l-2 2 2 2M1701 737l2 2-2 2" fill="none" stroke="#a0a0a0"/>
<path d="M1713 735h11v9h-9zM1715 733v12M1713 744h12M1722 733l3 3" fill="none" stroke="#8a8a8a"/>
<rect x="1736" y="738" width="10" height="8" fill="#a0a0a0"/><path d="M1738 738v-2a3 3 0 0 1 6 0v2" fill="none" stroke="#a0a0a0" stroke-width="1.300"/>
<text class="g" x="1769" y="743" textLength="14" lengthAdjust="spacingAndGlyphs">Fill:</text>
<rect x="1787.500" y="730.500" width="51" height="16" rx="2" fill="#4e4e4e" stroke="#5e5e5e"/><rect x="1789" y="732" width="33" height="13" fill="#474747"/><path d="M1823.500 731v15" stroke="#5e5e5e"/>
<text x="1793" y="743" font-size="10.500" fill="#757575">100%</text><path d="M1828 737l3 3 3-3" fill="none" stroke="#6a6a6a"/>
<!-- layer list -->
<rect x="1608" y="755" width="311" height="259" fill="#4b4b4b"/>
<rect x="1608" y="755" width="295" height="29" fill="#535353"/>
<rect x="1608" y="785" width="295" height="31" fill="#535353"/>
<path d="M1608 784.500h295M1608 816.500h295" stroke="#3e3e3e"/>
<path d="M1637.500 755v61" stroke="#454545"/>
<use href="#eye" x="1617" y="766"/><use href="#eye" x="1617" y="797"/>
<rect x="1643" y="759" width="31" height="22" fill="#fff"/>
<rect x="1643" y="759" width="31" height="1" fill="#222"/>
<rect x="1645" y="763" width="6" height="6" fill="#ddd"/><rect x="1651" y="763" width="2" height="8" fill="#9bc0d8"/><rect x="1655" y="762" width="2" height="7" fill="#8bc26b"/><rect x="1660" y="762" width="3" height="6" fill="#e37756"/><rect x="1668" y="762" width="2" height="7" fill="#7fa061"/>
<rect x="1644" y="770" width="29" height="1" fill="#ccc"/><rect x="1655" y="771" width="4" height="4" fill="#e37756"/><rect x="1660" y="772" width="5" height="3" fill="#f0cda5"/><rect x="1665" y="771" width="4" height="4" fill="#e37756"/><rect x="1644" y="776" width="6" height="4" fill="#b5d2e2"/><rect x="1644" y="776" width="29" height="1" fill="#ddd"/>
<rect x="1643" y="790" width="31" height="22" fill="#fff"/><rect x="1643" y="790" width="31" height="1" fill="#222"/>
<text class="l" x="1683" y="774" textLength="33" lengthAdjust="spacingAndGlyphs">Layer 3</text>
<text class="l" font-style="italic" x="1683" y="805" textLength="55" lengthAdjust="spacingAndGlyphs">Background</text>
<rect x="1877.500" y="800.500" width="9" height="8" fill="none" stroke="#e0e0e0"/><path d="M1879.500 800v-2a2.500 2.500 0 0 1 5 0v2" fill="none" stroke="#e0e0e0"/><rect x="1881" y="804" width="2" height="2" fill="#e0e0e0"/>
<!-- layer footer -->
<rect x="1608" y="1014" width="311" height="25" fill="#535353"/>
<path d="M1608 1014.500h311" stroke="#3e3e3e"/>
<path d="M1724 1023.500h-3a3.500 3.500 0 0 0 0 7h3M1724 1023.500h3a3.500 3.500 0 0 1 0 7h-3M1720 1027h8" fill="none" stroke="#8a8a8a"/>
<text x="1746" y="1032" font-size="14" font-style="italic" font-family="Liberation Serif" fill="#8a8a8a">fx</text>
<rect x="1771" y="1022" width="13" height="10" fill="#aaa"/><circle cx="1777.500" cy="1027" r="3" fill="#535353"/>
<circle cx="1805" cy="1027" r="5.500" fill="#e0e0e0"/><path d="M1809 1023a5.500 5.500 0 0 1-8 8z" fill="#535353"/><path d="M1809 1033h3l-1.500 2z" fill="#ddd"/>
<path d="M1826 1022h12v10h-12zM1826 1020h6v1h-6z" fill="#e0e0e0"/>
<rect x="1854.500" y="1022.500" width="10" height="10" fill="none" stroke="#e0e0e0"/><path d="M1857 1027.500h5M1859.500 1025v5" stroke="#e0e0e0"/>
<use href="#trash" x="1879" y="1021" opacity=".6"/>

<!-- DIALOG -->
<rect x="817" y="309" width="534" height="401" fill="#535353"/>
<rect x="817" y="310" width="534" height="29" fill="#fff"/>
<rect x="817" y="309" width="534" height="1" fill="#6c6c5c"/>
<text x="826.500" y="328" font-size="12" fill="#111" textLength="168" lengthAdjust="spacingAndGlyphs">Color Picker (Foreground Color)</text>
<path d="M1331 318l10 10M1341 318l-10 10" stroke="#222" stroke-width="1.100"/>
<rect x="828" y="370" width="256" height="256" fill="url(#gh)"/>
<rect x="828" y="370" width="256" height="256" fill="url(#gv)"/>
<path d="M829 388a4.500 4.500 0 0 1 0 9" fill="none" stroke="#000" stroke-width="1"/>
<rect x="1096" y="370" width="19" height="256" fill="url(#hue)"/>
<path d="M1087 409h4l3 3-3 3h-4z" fill="#efefef"/>
<path d="M1124 409h-3l-3.500 3 3.500 3h3z" fill="#efefef"/>
<rect x="1127.500" y="386.500" width="60" height="67" fill="#222"/>
<rect x="1128" y="387" width="59" height="33" fill="#f8e5c6"/>
<rect x="1128" y="420" width="59" height="33" fill="#92d744"/>
<text class="d" x="1145" y="382" textLength="23" lengthAdjust="spacingAndGlyphs">new</text>
<text class="d" x="1137.500" y="468" textLength="38" lengthAdjust="spacingAndGlyphs">current</text>
<path d="M1202 427l5 3v5l-5 3-5-3v-5zM1197 430l5 3 5-3M1202 433v5" fill="none" stroke="#ddd"/>
<rect x="1196.500" y="441.500" width="12" height="12" fill="#fffbdf" stroke="#fff"/>
<!-- buttons -->
<rect x="1226" y="350.500" width="114" height="24" rx="12" fill="none" stroke="#c8c8c8" stroke-width="1.500"/>
<rect x="1226" y="384.500" width="114" height="24" rx="12" class="bt"/>
<rect x="1226" y="425.500" width="114" height="24" rx="12" class="bt"/>
<rect x="1226" y="467.500" width="114" height="24" rx="12" class="bt"/>
<text class="d" x="1275.500" y="367" textLength="15.500" lengthAdjust="spacingAndGlyphs">OK</text>
<text class="d" x="1265" y="401" textLength="36" lengthAdjust="spacingAndGlyphs">Cancel</text>
<text class="d" x="1237" y="442" textLength="93" lengthAdjust="spacingAndGlyphs">Add to Swatches</text>
<text class="d" x="1244" y="484" textLength="78.500" lengthAdjust="spacingAndGlyphs">Color Libraries</text>
<!-- radios -->
<circle cx="1134.500" cy="518.500" r="6" fill="#e0e0e0"/><circle cx="1134.500" cy="518.500" r="2.800" fill="#444"/>
<g class="rd">
<circle cx="1134.500" cy="546" r="5.800"/><circle cx="1134.500" cy="573" r="5.800"/><circle cx="1134.500" cy="604" r="5.800"/><circle cx="1134.500" cy="631" r="5.800"/><circle cx="1134.500" cy="658" r="5.800"/>
<circle cx="1245.500" cy="518.500" r="5.800"/><circle cx="1245.500" cy="546" r="5.800"/><circle cx="1244.500" cy="573" r="5.800"/>
</g>
<!-- fields -->
<g class="fd">
<rect x="1173.500" y="508.500" width="34" height="21"/><rect x="1172.500" y="535.500" width="34" height="21"/><rect x="1172.500" y="562.500" width="34" height="21"/>
<rect x="1172.500" y="593.500" width="34" height="21"/><rect x="1173.500" y="620.500" width="34" height="21"/><rect x="1172.500" y="647.500" width="34" height="21"/>
<rect x="1283.500" y="508.500" width="42" height="21"/><rect x="1283.500" y="535.500" width="42" height="21"/><rect x="1283.500" y="562.500" width="42" height="21"/>
<rect x="1283.500" y="593.500" width="34" height="21"/><rect x="1283.500" y="620.500" width="34" height="21"/><rect x="1283.500" y="647.500" width="34" height="21"/><rect x="1283.500" y="674.500" width="34" height="21"/>
</g>
<rect x="1145.500" y="678.500" width="79" height="21" fill="#444" stroke="#0d63c8"/>
<g class="d">
<text x="1147" y="523">H:</text><text x="1147" y="550">S:</text><text x="1147" y="577">B:</text><text x="1147" y="608">R:</text><text x="1147" y="635">G:</text><text x="1147" y="662">B:</text>
<text x="1258" y="523">L:</text><text x="1258" y="550">a:</text><text x="1257" y="577">b:</text>
<text x="1179" y="523">300</text><text x="1177" y="550">0</text><text x="1177" y="577">91</text>
<text x="1178" y="608">233</text><text x="1178" y="635">233</text><text x="1177" y="662">233</text>
<text x="1289" y="523">92</text><text x="1289" y="550">0</text><text x="1289" y="577">0</text>
<text x="1289" y="608">7</text><text x="1289" y="635">5</text><text x="1289" y="662">6</text><text x="1289" y="689">0</text>
<text x="1266" y="608">C:</text><text x="1264" y="635">M:</text><text x="1265" y="662">Y:</text><text x="1266" y="689">K:</text>
<text x="1212" y="523" font-size="14">°</text><text x="1212" y="551">%</text><text x="1213" y="578">%</text>
<text x="1325" y="609">%</text><text x="1325" y="636">%</text><text x="1325" y="663">%</text><text x="1325" y="690">%</text>
<text x="1131" y="693">#</text>
<text x="1150" y="693" textLength="35" lengthAdjust="spacingAndGlyphs">e9e9e9</text>
</g>
<path d="M1150.500 682v12" stroke="#eee"/>
<rect x="828.500" y="640.500" width="12" height="12" rx="2" fill="none" stroke="#7a7a7a"/>
<text class="d" x="847.500" y="650" textLength="91" lengthAdjust="spacingAndGlyphs">Only Web Colors</text>
</svg>
</body></html>
